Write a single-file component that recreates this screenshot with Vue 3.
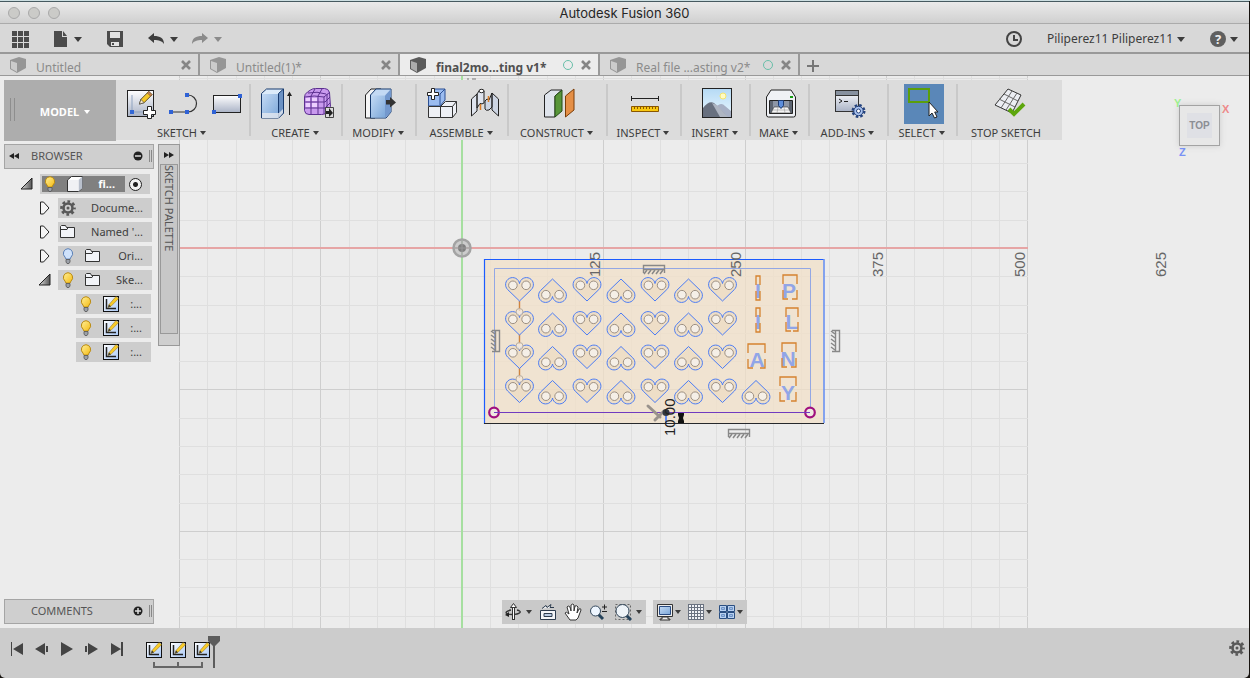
<script setup>
import { ref } from 'vue'

const tabs = [
  { label: 'Untitled' },
  { label: 'Untitled(1)*' },
  { label: 'final2mo...ting v1*', active: true, synced: true },
  { label: 'Real file ...asting v2*', synced: true },
]

const groups = [
  { label: 'SKETCH', menu: true, icons: ['sketch', 'line', 'rect'] },
  { label: 'CREATE', menu: true, icons: ['extrude', 'form'] },
  { label: 'MODIFY', menu: true, icons: ['presspull'] },
  { label: 'ASSEMBLE', menu: true, icons: ['component', 'joint'] },
  { label: 'CONSTRUCT', menu: true, icons: ['plane'] },
  { label: 'INSPECT', menu: true, icons: ['measure'] },
  { label: 'INSERT', menu: true, icons: ['image'] },
  { label: 'MAKE', menu: true, icons: ['printer'] },
  { label: 'ADD-INS', menu: true, icons: ['script'] },
  { label: 'SELECT', menu: true, icons: ['select'], active: true },
  { label: 'STOP SKETCH', menu: false, icons: ['stop'] },
]

const tree = [
  { level: 'one', arrow: 'closed', icons: ['gear'], label: 'Docume...' },
  { level: 'one', arrow: 'closed', icons: ['folder'], label: "Named '..." },
  { level: 'one', arrow: 'closed', icons: ['bulb-off', 'folder'], label: 'Ori...' },
  { level: 'one', arrow: 'open', icons: ['bulb', 'folder'], label: 'Ske...' },
  { level: 'two', icons: ['bulb', 'mini-sketch'], label: ':...' },
  { level: 'two', icons: ['bulb', 'mini-sketch'], label: ':...' },
  { level: 'two', icons: ['bulb', 'mini-sketch'], label: ':...' },
]

const viewTools = [
  { icon: 'orbit', name: 'Orbit', menu: true },
  { icon: 'lookat', name: 'Look at' },
  { icon: 'pan', name: 'Pan' },
  { icon: 'zoom', name: 'Zoom' },
  { icon: 'zoomwin', name: 'Zoom window', menu: true },
]
const displayTools = [
  { icon: 'display', name: 'Display settings', menu: true },
  { icon: 'grid', name: 'Grid and snaps', menu: true },
  { icon: 'viewports', name: 'Viewports', menu: true },
]
const playback = [
  { icon: 'first', name: 'Go to start' },
  { icon: 'prev', name: 'Step back' },
  { icon: 'play', name: 'Play' },
  { icon: 'next', name: 'Step forward' },
  { icon: 'last', name: 'Go to end' },
]

const active = ref(true)

const step = 28.28
const columns = Array.from({ length: 31 }, (_, i) => ({
  x: Math.round(179 + i * step),
  major: i % 5 === 0,
}))
const rows = Array.from({ length: 40 }, (_, i) => ({
  y: Math.round(248 + (i - 6) * step),
  major: (i - 6) % 5 === 0,
}))
const axisLabels = [
  { x: 600, t: '125' },
  { x: 741, t: '250' },
  { x: 883, t: '375' },
  { x: 1025, t: '500' },
  { x: 1166, t: '625' },
]

const heartX = [519.5, 552.5, 587, 621, 655, 688.5, 722.5, 756]
const heartY = [278, 312, 345.5, 379.5]
const hearts = heartY.flatMap((y, r) =>
  heartX.slice(0, r === 3 ? 8 : 7).map((x, c) => ({ x, y, flip: c % 2 === 1 })),
)

const letters = [
  { t: 'I', x: 758, y: 298, box: [756, 276, 4, 24] },
  { t: 'P', x: 789, y: 298, box: [783, 275, 14, 24] },
  { t: 'I', x: 758, y: 329, box: [756, 308, 4, 24] },
  { t: 'L', x: 792, y: 329, box: [786, 308, 12, 23] },
  { t: 'A', x: 757, y: 367, box: [748, 344, 17, 24] },
  { t: 'N', x: 788, y: 366, box: [782, 343, 14, 24] },
  { t: 'Y', x: 788, y: 400, box: [780, 377, 16, 24] },
]
const bracket = ([x, y, w, h]) => {
  const k = Math.min(5, w / 2)
  return (
    `M${x} ${y + 9}V${y}H${x + w}V${y + 9}` +
    `M${x + w} ${y + h - 9}V${y + h}H${x + w - k}M${x + k} ${y + h}H${x}V${y + h - 9}`
  )
}
</script>

<template>
  <div class="app">
    <svg class="defs" aria-hidden="true">
      <defs>
        <linearGradient id="metal" x1="0" y1="0" x2="0" y2="1">
          <stop offset="0" stop-color="#fff" /><stop offset="1" stop-color="#aab3c6" />
        </linearGradient>
        <linearGradient id="blue" x1="0" y1="0" x2="1" y2="1">
          <stop offset="0" stop-color="#c4daf4" /><stop offset="1" stop-color="#7ba7d9" />
        </linearGradient>
        <linearGradient id="sky" x1="0" y1="0" x2="0" y2="1">
          <stop offset="0" stop-color="#b5daf5" /><stop offset="1" stop-color="#eaf7ff" />
        </linearGradient>
        <linearGradient id="paper" x1="0" y1="0" x2="1" y2="1">
          <stop offset="0" stop-color="#fff" /><stop offset="1" stop-color="#a9c8f5" />
        </linearGradient>
        <linearGradient id="gold" x1="0" y1="0" x2="1" y2="1">
          <stop offset="0" stop-color="#fff09a" /><stop offset="1" stop-color="#f5ba10" />
        </linearGradient>
        <linearGradient id="shade" x1="0" y1="0" x2="1" y2="0">
          <stop offset="0" stop-color="#ddd" /><stop offset="1" stop-color="#555" />
        </linearGradient>
      </defs>

      <symbol id="i-apps" viewBox="0 0 17 17">
        <path d="M0 0h5v5H0zM6 0h5v5H6zM12 0h5v5h-5zM0 6h5v5H0zM6 6h5v5H6zM12 6h5v5h-5zM0 12h5v5H0zM6 12h5v5H6zM12 12h5v5h-5z" fill="#4b4b4b" />
      </symbol>
      <symbol id="i-file" viewBox="0 0 14 16">
        <path d="M0 0h8v6h5v10H0zM9 0l4 5H9z" fill="#4b4b4b" />
      </symbol>
      <symbol id="i-save" viewBox="0 0 16 16">
        <path d="M0 0h16v16H3l-3-3z" fill="#4b4b4b" />
        <path d="M3 1h10v6H3zM4 11h8v4H4z" fill="#e2e2e2" />
        <path d="M5 12h2v2H5z" fill="#4b4b4b" />
      </symbol>
      <symbol id="i-undo" viewBox="0 0 16 12">
        <path d="M0 5L6 0v3c6 0 10 2 10 8-2-3-5-4-10-4v3z" fill="currentColor" />
      </symbol>
      <symbol id="i-clock" viewBox="0 0 16 16">
        <circle cx="8" cy="8" r="7" fill="none" stroke="#444" stroke-width="2" />
        <path d="M8 4v5h4" fill="none" stroke="#444" stroke-width="2" />
      </symbol>
      <symbol id="i-cube" viewBox="0 0 16 16">
        <path d="M0 3L9 0l7 2v9l-9 5-7-4z" fill="currentColor" />
        <path d="M1 4l6 2v9l-6-3.500z" fill="#fff" opacity=".5" />
      </symbol>
      <symbol id="i-close" viewBox="0 0 10 10">
        <path d="M1 1l8 8M9 1L1 9" stroke="#858585" stroke-width="2.600" />
      </symbol>

      <symbol id="i-pencil" viewBox="0 0 16 16">
        <path d="M1 15l1.500-5L11 1.500 14.500 5 6 13.500z" fill="#f6ca2a" stroke="#5a4a20" />
        <path d="M1 15l1.500-5L6 13.500z" fill="#f9ecd0" stroke="#444" stroke-width=".7" />
        <path d="M11 1.500L14.500 5l-1.600 1.600-3.500-3.500z" fill="#c98750" stroke="#704a30" stroke-width=".6" />
      </symbol>
      <symbol id="i-sketch" viewBox="0 0 32 32">
        <rect x="2.500" y="2.500" width="26" height="26" fill="url(#metal)" stroke="#222" />
        <path d="M7 7v17h17" fill="none" stroke="#8fa3c0" />
        <rect x="5" y="22" width="4" height="4" fill="#3469d6" />
        <use href="#i-pencil" x="13" y="2" width="16" height="15" />
        <path d="M22.500 18.500h4v4h4v4h-4v4h-4v-4h-4v-4h4z" fill="#fff" stroke="#222" />
      </symbol>
      <symbol id="i-line" viewBox="0 0 32 32">
        <path d="M3 24h17a8.500 8.500 0 0 0 0-17" fill="none" stroke="#333" stroke-width="1.200" />
        <path d="M1 22h4v4H1zM17 22h4v4h-4zM17 5h4v4h-4z" fill="#2f62d6" />
      </symbol>
      <symbol id="i-rect" viewBox="0 0 32 32">
        <rect x="2.500" y="7.500" width="27" height="17" fill="url(#metal)" stroke="#222" />
        <path d="M1 22h4v4H1zM27 6h4v4h-4z" fill="#2f62d6" />
      </symbol>
      <symbol id="i-extrude" viewBox="0 0 32 32">
        <path d="M1.500 5.500l5-4.500h17v24l-5 5h-17z" fill="#dcebfa" stroke="#173a6e" />
        <path d="M2 6h16v24H2z" fill="url(#blue)" />
        <path d="M18.500 5.500l5-4.500v24l-5 5z" fill="#6c92c4" stroke="#173a6e" />
        <path d="M2 25h17l4-4v4l-4.500 5H2z" fill="#e6eaf0" opacity=".8" />
        <path d="M29.500 27V6" stroke="#222" /><path d="M27 8l2.500-4.500L32 8z" fill="#222" />
      </symbol>
      <symbol id="i-form" viewBox="0 0 32 32">
        <path d="M1.500 9q0-3 3-5l3-2q2-1.500 5-1.500h9q4 0 5 4l1 14q0 3-2 4l-3 3q-1.500 1-4 1H6q-4 0-4.500-4z" fill="#c99aee" stroke="#5c3090" />
        <path d="M2 9q9-2 19 0l6-5M8 8v18M15 8v18M21 9v17M2 14h20l5-5M2 20h20l5-5M5 5q9-2 18 1M12 1L8 8M19 1l-4 7M24 6v17" fill="none" stroke="#5c3090" />
        <path d="M3 10h4v3H3zM9 10h5v3H9zM3 15h4v4H3zM9 15h5v4H9z" fill="#eccfff" />
        <path d="M22.500 19.500h8v10h-8z" fill="#dcdcdc" stroke="#444" />
        <path d="M23 23h3v-3l4 5-4 4v-3h-3z" fill="#222" />
      </symbol>
      <symbol id="i-presspull" viewBox="0 0 32 32">
        <path d="M1.500 7L7 1h10v23l-6 6H1.500z" fill="#f5f5f5" stroke="#222" />
        <path d="M6.500 7l5.500-6h15v23l-5 6H6.500z" fill="#c4daf4" stroke="#173a6e" />
        <path d="M7 7.500h14v22H7z" fill="url(#blue)" /><path d="M21 7.500L27 1v23l-6 6z" fill="#7398cd" />
        <path d="M22 12h4V9l6 5.500-6 5v-3h-4z" fill="#333" />
      </symbol>
      <symbol id="i-component" viewBox="0 0 32 32">
        <path d="M2.500 6L8 1h11v11l-5 6H2.500z" fill="#9bbcf0" stroke="#2b4f94" />
        <path d="M14 6v11M14 6l5-5" stroke="#2b4f94" fill="none" />
        <path d="M2.500 18.500h12v11h-12zM14.500 18.500l5-5h11v11l-4 5h-12z" fill="#eef0f5" stroke="#333" />
        <path d="M26.500 18.500v11M14.500 18.500h12l4-5" stroke="#333" fill="none" />
        <path d="M5.500.5h3v4h4v3h-4v4h-3v-4h-4v-3h4z" fill="#fff" stroke="#222" />
      </symbol>
      <symbol id="i-joint" viewBox="0 0 32 32">
        <path d="M2.500 11L8 6v17l-5.500 5zM8 6l2-3q2.500-2 5 0v12q-2 1.500-4 .5L8 20z" fill="#dfe4ee" stroke="#222" />
        <path d="M29.500 11L23 5v17l6.500 6zM23 5v14l-3 3q-3 1-4-1V13l2-2 2 1z" fill="#cdd5e3" stroke="#222" />
        <path d="M11.500 16v6M19.500 8v6" stroke="#d97c25" stroke-width="1.500" />
        <ellipse cx="12.500" cy="3" rx="2.500" ry="1.700" fill="#fff" stroke="#222" />
      </symbol>
      <symbol id="i-plane" viewBox="0 0 32 32">
        <path d="M1.500 7L8 2h11l-7 6v21H1.500z" fill="#dfe4ec" stroke="#222" />
        <path d="M12 8l7-6v21l-7 6z" fill="#58963a" stroke="#244c16" />
        <path d="M22.500 8L31 1v21l-8.500 7z" fill="#e58f46" stroke="#7a3d08" />
      </symbol>
      <symbol id="i-measure" viewBox="0 0 32 32">
        <path d="M2 10.500h28M2.500 8v5M29.500 8v5" stroke="#222" fill="none" />
        <path d="M2.500 18.500h27v5h-27z" fill="#f8c811" stroke="#8a5700" />
        <path d="M5.500 19v2M8.500 19v2M11.500 19v2M14.500 19v2M17.500 19v2M20.500 19v2M23.500 19v2M26.500 19v2" stroke="#8a5700" />
      </symbol>
      <symbol id="i-image" viewBox="0 0 32 32">
        <rect x="1.500" y=".5" width="29" height="29" fill="url(#sky)" stroke="#222" />
        <circle cx="22" cy="8" r="3" fill="#fffbc4" stroke="#f5e56d" />
        <path d="M14 20q6-7 10-2l6 5v6H14z" fill="#a7b0c5" />
        <path d="M2 20q6-8 11-5l10 10 3 4H2z" fill="#68707f" /><path d="M11 15l8 14h8l-11-12z" fill="#aeb5c2" />
      </symbol>
      <symbol id="i-printer" viewBox="0 0 32 32">
        <path d="M1.500 9L6 2h20l4.500 7v18q0 2-2 2h-25q-2 0-2-2z" fill="#eff1f5" stroke="#222" />
        <path d="M4.500 12.500h23v13h-23z" fill="#5d6572" stroke="#222" /><path d="M8 13h16v8H8z" fill="#8d96a6" />
        <path d="M9 19h14l3 6H6z" fill="#f4f4f4" stroke="#333" stroke-width=".6" />
        <path d="M8 22h16M13 19l-1 6M19 19l1 6" stroke="#999" stroke-width=".6" />
        <path d="M13.500 12.500h5v5l-2.500 3-2.500-3z" fill="#5d8edb" stroke="#203e74" />
        <path d="M25 8h3v2h-3z" fill="#179b12" />
      </symbol>
      <symbol id="i-script" viewBox="0 0 32 32">
        <rect x="1.500" y="2.500" width="23" height="21" fill="url(#metal)" stroke="#333" />
        <path d="M2 3h22v4H2z" fill="#87919f" /><path d="M2 7.500h22" stroke="#333" />
        <path d="M5 11l3 2-3 2M10 13.500h4" stroke="#222" fill="none" />
        <circle cx="24.500" cy="23" r="5.700" fill="none" stroke="#24427d" stroke-width="2.600" stroke-dasharray="2.500 1.980" />
        <circle cx="24.500" cy="23" r="4.700" fill="#aac3ef" stroke="#24427d" />
        <circle cx="24.500" cy="23" r="2" fill="#fff" stroke="#24427d" />
      </symbol>
      <symbol id="i-select" viewBox="0 0 32 32">
        <path d="M1 1h20v13H1z" fill="none" stroke="#5b9f0c" stroke-width="2" />
        <path d="M21 14v14l3-3 2.500 5 2.500-1-2.300-5H30z" fill="#fff" stroke="#222" />
      </symbol>
      <symbol id="i-stop" viewBox="0 0 32 32">
        <path d="M14 1l13 6-9 18L1 17z" fill="#eceef3" stroke="#333" />
        <path d="M10 6l14 7M5 11l16 8M18 3L7 20M23 5l-11 17" stroke="#666" fill="none" />
        <path d="M15 21l5 5 10-10" fill="none" stroke="#5da60c" stroke-width="4" />
      </symbol>

      <symbol id="i-bulb" viewBox="0 0 16 16">
        <path d="M8 .7a4.800 4.800 0 0 1 3 8.400l-1 2H6l-1-2A4.800 4.800 0 0 1 8 .7z" fill="url(#gold)" stroke="#b98a12" />
        <path d="M6 11.500h4v2.500l-1 1.500H7L6 14z" fill="#9ba0a8" stroke="#555" stroke-width=".8" />
      </symbol>
      <symbol id="i-bulb-off" viewBox="0 0 16 16">
        <path d="M8 .7a4.800 4.800 0 0 1 3 8.400l-1 2H6l-1-2A4.800 4.800 0 0 1 8 .7z" fill="#cfe2fb" stroke="#5a7fb5" />
        <path d="M6 11.500h4v2.500l-1 1.500H7L6 14z" fill="#9ba0a8" stroke="#555" stroke-width=".8" />
      </symbol>
      <symbol id="i-body" viewBox="0 0 16 16">
        <path d="M.5 4l4-3.500h11V12l-4 3.500H.5z" fill="#fff" stroke="#333" />
        <path d="M11.500 4l4-3.500V12l-4 3.500z" fill="#b9c0cc" /><path d="M1 4h10.500v11H1z" fill="#f0f1f4" />
      </symbol>
      <symbol id="i-gear" viewBox="0 0 16 16">
        <circle cx="8" cy="8" r="6.500" fill="none" stroke="#585858" stroke-width="2.600" stroke-dasharray="2.700 2.400" stroke-dashoffset="1.350" />
        <circle cx="8" cy="8" r="4.500" fill="none" stroke="#585858" stroke-width="2.600" />
        <circle cx="8" cy="8" r="1.500" fill="#585858" />
      </symbol>
      <symbol id="i-folder" viewBox="0 0 16 16">
        <path d="M.5 13.500v-11l1-1h4l1 2h8v10z" fill="#f2f4f8" stroke="#333" /><path d="M1 5.500h6l1-2" fill="none" stroke="#333" />
      </symbol>
      <symbol id="i-mini-sketch" viewBox="0 0 16 16">
        <rect x=".5" y=".5" width="15" height="15" fill="url(#paper)" stroke="#111" />
        <path d="M3.500 3v9.500H13" fill="none" stroke="#222" stroke-width="1.500" />
        <path d="M5 11.500l1-3L13 .5l2.500 2.200-7.500 7.600z" fill="#f8cb28" stroke="#8a6a20" stroke-width=".5" />
        <path d="M5 11.500l1-3 2 1.800z" fill="#333" />
      </symbol>

      <symbol id="i-orbit" viewBox="0 0 18 18">
        <path d="M13 7q4 1 3 2.500-2 2-8 2-5 0-6-1.500 0-2 5-3" fill="none" stroke="#333" stroke-width="1.300" />
        <path d="M9.500 17V3" stroke="#333" stroke-width="3" /><path d="M9.500 16V3" stroke="#fff" />
        <path d="M6.500 4.500l3-4 3 4z" fill="#fff" stroke="#333" /><path d="M1 12l4-3v5z" fill="#222" />
      </symbol>
      <symbol id="i-lookat" viewBox="0 0 18 18">
        <path d="M1.500 7.500h15v9h-15zM3 5.500l4-3 1 2 4-3-1 3h4" fill="#f4f6f9" stroke="#2d3c4e" />
        <path d="M5 10.500h8v3H5z" fill="#b9cbe3" stroke="#2d3c4e" />
      </symbol>
      <symbol id="i-pan" viewBox="0 0 18 18">
        <path d="M6 17L1 10q1-2 4 1L3 4q1-2 3 0l1 4V2q2-2 3 0v6l1-5q2-1 3 1l-1 6 2-4q2-1 2 1l-3 8-2 2z" fill="#fff" stroke="#333" />
      </symbol>
      <symbol id="i-zoom" viewBox="0 0 18 18">
        <path d="M9 11l5 5" stroke="#26435b" stroke-width="3" /><circle cx="6.500" cy="8" r="5" fill="#eef6ff" stroke="#34485c" />
        <path d="M13 4h5M15.500 1.500v5M13 8.500h5" stroke="#222" fill="none" />
      </symbol>
      <symbol id="i-zoomwin" viewBox="0 0 18 18">
        <path d="M1.500 1.500h15v15h-15z" fill="none" stroke="#666" stroke-dasharray="2 2" />
        <path d="M12 12l5 5" stroke="#26435b" stroke-width="3" /><circle cx="8.500" cy="8" r="6.500" fill="#eef3f8" stroke="#34485c" />
      </symbol>
      <symbol id="i-display" viewBox="0 0 18 18">
        <path d="M1.500 1.500h15v12h-15zM6 14v2H4v1h10v-1h-2v-2z" fill="#eee" stroke="#333" /><path d="M3.500 3.500h11v8h-11z" fill="url(#blue)" stroke="#2a4c83" />
      </symbol>
      <symbol id="i-grid" viewBox="0 0 18 18">
        <path d="M1.500 1.500h15v15h-15z" fill="#f2f4f8" /><path d="M1.500 1v16M4.500 1v16M7.500 1v16M10.500 1v16M13.500 1v16M16.500 1v16M1 1.500h16M1 4.500h16M1 7.500h16M1 10.500h16M1 13.500h16M1 16.500h16" stroke="#6a7280" />
      </symbol>
      <symbol id="i-viewports" viewBox="0 0 18 18">
        <path d="M1.500 2.500h7v6h-7zM9.500 2.500h7v6h-7zM1.500 9.500h7v6h-7zM9.500 9.500h7v6h-7z" fill="#b9d1f0" stroke="#2b4f82" />
        <path d="M3.500 4.500h3v2h-3zM11.500 4.500h3v2h-3zM3.500 11.500h3v2h-3zM11.500 11.500h3v2h-3z" fill="#9ebce4" stroke="#6e93c6" />
      </symbol>
      <symbol id="i-first" viewBox="0 0 16 16"><path d="M2 1h1v14H2zM14 2v12L4 8z" fill="#444" /></symbol>
      <symbol id="i-prev" viewBox="0 0 16 16"><path d="M11 2v12L1 8zM12 5h2v6h-2z" fill="#444" /></symbol>
      <symbol id="i-play" viewBox="0 0 16 16"><path d="M2 1v14l12-7z" fill="#444" /></symbol>
      <symbol id="i-next" viewBox="0 0 16 16"><path d="M4 2v12l10-6zM1 5h2v6H1z" fill="#444" /></symbol>
      <symbol id="i-last" viewBox="0 0 16 16"><path d="M12 1h2v14h-2zM2 2v12l10-6z" fill="#444" /></symbol>
      <symbol id="i-rewind" viewBox="0 0 10 8"><path d="M5 1v6L0 4zM10 1v6L5 4z" fill="#222" /></symbol>
      <symbol id="i-forward" viewBox="0 0 10 8"><path d="M0 1v6l5-3zM5 1v6l5-3z" fill="#222" /></symbol>
    </svg>

    <header class="titlebar">
      <div class="lights"><i></i><i></i><i></i></div>
      <h1>Autodesk Fusion 360</h1>
    </header>

    <nav class="quick" aria-label="Quick access">
      <button aria-label="Data panel"><svg width="17" height="17"><use href="#i-apps" /></svg></button>
      <button aria-label="File"><svg width="14" height="16"><use href="#i-file" /></svg><i class="caret"></i></button>
      <button aria-label="Save"><svg width="16" height="16"><use href="#i-save" /></svg></button>
      <div class="history">
        <button aria-label="Undo"><svg width="16" height="12"><use href="#i-undo" /></svg><i class="caret"></i></button>
        <button aria-label="Redo" class="redo"><svg class="mirror" width="16" height="12"><use href="#i-undo" /></svg><i class="caret"></i></button>
      </div>
      <div class="account">
        <button aria-label="Job status"><svg width="16" height="16"><use href="#i-clock" /></svg></button>
        <button class="user">Piliperez11 Piliperez11<i class="caret"></i></button>
        <button aria-label="Help"><span class="help">?</span><i class="caret"></i></button>
      </div>
    </nav>

    <div class="tabs">
      <div v-for="t in tabs" :key="t.label" class="tab" :class="{ active: t.active }">
        <svg class="cube" width="16" height="16"><use href="#i-cube" /></svg>
        <button class="tab-label">{{ t.label }}</button>
        <i v-if="t.synced" class="sync"></i>
        <button aria-label="Close tab"><svg width="10" height="10"><use href="#i-close" /></svg></button>
      </div>
      <button class="add-tab" aria-label="New tab">
        <svg width="12" height="12"><path d="M6 0v12M0 6h12" stroke="#777" stroke-width="2" /></svg>
      </button>
    </div>

    <main class="workspace">
      <svg class="scene" role="img" aria-label="Sketch canvas">
        <g transform="translate(0 -76)">
          <g shape-rendering="crispEdges">
            <path v-for="c in columns" :key="'c' + c.x" :d="`M${c.x + 0.5} 76V3000`" :stroke="c.major ? '#cecece' : '#dfdfdf'" />
            <path v-for="r in rows" :key="'r' + r.y" :d="`M179 ${r.y + 0.5}H1028`" :stroke="r.major ? '#cecece' : '#dfdfdf'" />
            <path d="M179 248H1028" stroke="#e6a5a5" stroke-width="2" />
            <path d="M462 76V3000" stroke="#a6dfa0" stroke-width="2" />
          </g>
          <path d="M467 79h2M472 79h4" stroke="#777" stroke-width="1" />
          <g>
            <circle cx="462" cy="248" r="8.500" fill="#c4c4c4" fill-opacity=".8" stroke="#a3a3a3" stroke-width="2.500" />
            <circle cx="462" cy="248" r="4" fill="#808080" /><path d="M462 241v14M455 248h14" stroke="#999" />
          </g>

          <path d="M485 260h339v163H485z" fill="#f1dfc8" fill-opacity=".76" />
          <path d="M484.500 424V259.500H824" fill="none" stroke="#1c5cff" stroke-width="1.200" />
          <path d="M824 259v164" stroke="#6a91f2" stroke-width="1.600" /><path d="M484 423.500h340" stroke="#26282c" stroke-width="1.200" />
          <path d="M494.500 412V268.500h316V412" fill="none" stroke="#93a7e4" />
          <path d="M494 412.500h316" stroke="#713bc0" stroke-width="1.200" />

          <g v-for="a in axisLabels" :key="a.t">
            <text class="axis" :transform="`translate(${a.x} 277) rotate(-90)`">{{ a.t }}</text>
          </g>

          <path d="M519.500 301v10M519.500 334v10M519.500 368v10" stroke="#cf8440" stroke-width="1.400" />
          <g v-for="(h, n) in hearts" :key="n" :transform="h.flip ? `translate(${h.x} ${h.y + 24}) scale(1 -1)` : `translate(${h.x} ${h.y})`">
            <path d="M0 5.500A7 7 0 1 0 -11.800 11.600L0 23 11.800 11.600A7 7 0 1 0 0 5.500Z" fill="#ecdcc3" fill-opacity=".7" stroke="#4b7cf5" />
            <circle cx="-6.600" cy="7.300" r="4.300" fill="#f5efe7" stroke="#9c8f82" />
            <circle cx="6.600" cy="7.300" r="4.300" fill="#f5efe7" stroke="#9c8f82" />
          </g>
          <g fill="#f3eadf" fill-opacity=".7" stroke="#b9ad9e">
            <circle cx="519.500" cy="312" r="3.500" /><circle cx="519.500" cy="346" r="3.500" /><circle cx="519.500" cy="379" r="3.500" />
          </g>

          <g v-for="(l, n) in letters" :key="'l' + n">
            <text class="letter" :x="l.x" :y="l.y">{{ l.t }}</text>
            <path :d="bracket(l.box)" fill="none" stroke="#d5832f" stroke-width="1.300" />
          </g>

          <g fill="#efe9e1" stroke="#a0107f" stroke-width="2.200">
            <circle cx="494" cy="412.500" r="4.800" /><circle cx="810" cy="412.500" r="4.800" />
          </g>
          <path d="M494 412.500h6M804 412.500h6" stroke="#713bc0" />

          <g v-for="(p, n) in ['translate(643 265)', 'translate(728 429)', 'translate(500 330) rotate(90)', 'translate(840 330) rotate(90)']" :key="'h' + n" :transform="p">
            <path d="M.5 8V.5h21V8M.5 4.500h21" fill="none" stroke="#888" stroke-width="1.400" />
            <path d="M1 9l3-4M5 9l3-4M9 9l3-4M13 9l3-4M17 9l3-4" stroke="#888" stroke-width="1.500" fill="none" />
          </g>
          <path d="M648 406l12 11M655 420l9-9" stroke="#99928c" stroke-width="3" stroke-linecap="round" />
          <circle cx="666" cy="412.500" r="3.500" fill="#303640" />
          <path d="M666 416v7" stroke="#2c6bff" stroke-width="1.500" />
          <text class="dimension" transform="translate(675 436) rotate(-90)">10.00</text>
          <path d="M678 413h6v2l-1 3 1 3v2h-6v-2l1-3-1-3z" fill="#111" />
        </g>
      </svg>

      <div class="ribbon">
        <button class="mode">MODEL<i class="caret small"></i></button>
        <div v-for="g in groups" :key="g.label" class="group">
          <div class="icons">
            <button v-for="i in g.icons" :key="i" :class="{ chosen: g.active && active }" :aria-label="i">
              <svg width="32" height="32"><use :href="'#i-' + i" /></svg>
            </button>
          </div>
          <button class="group-label">{{ g.label }}<i v-if="g.menu" class="caret small"></i></button>
        </div>
      </div>

      <div class="viewcube">
        <b class="y">Y</b><b class="x">X</b><b class="z">Z</b>
        <button>TOP</button>
      </div>

      <div class="panels">
        <aside class="browser">
          <header class="panel-head">
            <svg width="10" height="8"><use href="#i-rewind" /></svg>
            <h2>BROWSER</h2>
            <button class="round" aria-label="Collapse browser"><svg width="10" height="10"><circle cx="5" cy="5" r="4.500" fill="#222" /><path d="M2 5h6" stroke="#ddd" stroke-width="1.500" /></svg></button>
            <i class="grip"></i>
          </header>
          <ul>
            <li class="root">
              <button aria-label="Collapse"><svg width="14" height="14"><path d="M12 1v11H1z" fill="url(#shade)" stroke="#222" /></svg></button>
              <div class="node">
                <div class="picked">
                  <svg width="16" height="16"><use href="#i-bulb" /></svg>
                  <svg width="16" height="16"><use href="#i-body" /></svg>
                  <span>fi...</span>
                </div>
                <input type="radio" checked aria-label="Activate component" />
              </div>
            </li>
            <li v-for="(r, n) in tree" :key="n" :class="r.level">
              <button v-if="r.arrow" :aria-label="r.arrow === 'open' ? 'Collapse' : 'Expand'">
                <svg v-if="r.arrow === 'open'" width="14" height="14"><path d="M12 1v11H1z" fill="url(#shade)" stroke="#222" /></svg>
                <svg v-else width="14" height="14"><path d="M2.500 1h3L11 7l-5.500 6h-3z" fill="#f4f4f4" stroke="#222" /></svg>
              </button>
              <div class="node">
                <svg v-for="i in r.icons" :key="i" width="16" height="16"><use :href="'#i-' + i" /></svg>
                <span>{{ r.label }}</span>
              </div>
            </li>
          </ul>
        </aside>
        <aside class="palette">
          <button aria-label="Expand palette"><svg width="12" height="8" viewBox="0 0 10 8"><use href="#i-forward" /></svg></button>
          <div class="palette-strip">SKETCH PALETTE</div>
        </aside>
      </div>

      <div class="bottom">
        <section class="panel-head comments">
          <h2>COMMENTS</h2>
          <button class="round" aria-label="Add comment"><svg width="10" height="10"><circle cx="5" cy="5" r="4.500" fill="#222" /><path d="M2 5h6M5 2v6" stroke="#ddd" stroke-width="1.500" /></svg></button>
          <i class="grip"></i>
        </section>
        <div class="navbar">
          <div class="navset">
            <button v-for="t in viewTools" :key="t.icon" :aria-label="t.name">
              <svg width="18" height="18"><use :href="'#i-' + t.icon" /></svg><i v-if="t.menu" class="caret small"></i>
            </button>
          </div>
          <div class="navset tight">
            <button v-for="t in displayTools" :key="t.icon" :aria-label="t.name">
              <svg width="18" height="18"><use :href="'#i-' + t.icon" /></svg><i class="caret small"></i>
            </button>
          </div>
        </div>
      </div>
    </main>

    <footer class="timeline">
      <div class="playback">
        <button v-for="p in playback" :key="p.icon" :aria-label="p.name"><svg width="16" height="16"><use :href="'#i-' + p.icon" /></svg></button>
      </div>
      <div class="track">
        <div class="features">
          <button v-for="n in 3" :key="n" :aria-label="'Sketch ' + n"><svg width="16" height="16"><use href="#i-mini-sketch" /></svg></button>
        </div>
        <svg width="50" height="8"><path d="M1 0v5h48V0M25 0v5" fill="none" stroke="#666" stroke-width="2" /></svg>
      </div>
      <svg class="marker" width="12" height="32"><path d="M0 0h12v5L7 10v22H5V10L0 5z" fill="#5c5c5c" /></svg>
      <button class="settings" aria-label="Timeline settings"><svg width="16" height="16"><use href="#i-gear" /></svg></button>
    </footer>
  </div>
</template>

<style>
body {
  margin: 0;
  background: #17130f;
}
</style>

<style scoped>
.app {
  box-sizing: border-box;
  display: flex;
  flex-direction: column;
  min-height: 100vh;
  padding-right: 1px;
  border-top: 1px solid #cddfe2;
  overflow: hidden;
  font: 11px/16px "Noto Sans", "Open Sans", sans-serif;
  color: #3d3d3d;
}
.defs {
  position: absolute;
  width: 0;
  height: 0;
}
svg {
  display: block;
  flex: none;
}
button {
  display: flex;
  align-items: center;
  padding: 0;
  border: 0;
  background: none;
  font: inherit;
  color: inherit;
  white-space: nowrap;
}
h1,
h2,
ul {
  margin: 0;
  padding: 0;
  list-style: none;
  font: inherit;
}
.caret {
  width: 0;
  height: 0;
  border: 4px solid transparent;
  border-top: 5px solid currentColor;
  border-bottom: 0;
}
.caret.small {
  border-width: 4px 3px 0;
}

.titlebar {
  display: grid;
  grid-template-columns: 1fr auto 1fr;
  align-items: center;
  height: 21px;
  padding: 0 8px;
  border-top: 1px solid #465a60;
  border-bottom: 1px solid #ababab;
  background: linear-gradient(#eaeaea, #d0d0d0);
}
.titlebar h1 {
  font: 13px/20px Inter, sans-serif;
  color: #262626;
}
.lights {
  display: flex;
  gap: 8px;
}
.lights i {
  box-sizing: border-box;
  width: 12px;
  height: 12px;
  border: 1px solid #a9a9a9;
  border-radius: 50%;
  background: #cbcbc8;
}

.quick {
  box-sizing: border-box;
  display: flex;
  align-items: center;
  gap: 25px;
  height: 30px;
  padding: 2px 11px 0 12px;
  border-bottom: 2px solid #999;
  background: #d8d8d8;
}
.quick button {
  gap: 6px;
}
.history {
  display: flex;
  gap: 14px;
}
.redo {
  color: #8b8b8b;
}
.mirror {
  transform: scaleX(-1);
}
.account {
  display: flex;
  align-items: center;
  gap: 25px;
  margin-left: auto;
}
.quick .account button {
  gap: 4px;
}
.quick .user {
  font-size: 12px;
}
.help {
  width: 16px;
  border-radius: 50%;
  background: #5f5f5f;
  color: #eee;
  font-weight: 700;
  font-size: 13px;
  text-align: center;
}

.tabs {
  display: flex;
  height: 21px;
  border-bottom: 1px solid #999;
  background: #d8d8d8;
}
.tab {
  box-sizing: border-box;
  display: flex;
  align-items: center;
  gap: 8px;
  width: 200px;
  padding: 0 7px 0 10px;
  border-right: 2px solid #999;
  color: #8b8b8b;
}
.tab-label {
  flex: 1;
  padding: 6px 0 0 2px;
  font-size: 12px;
}
.cube {
  color: #969696;
}
.tab.active {
  background: #ececec;
  color: #505050;
}
.tab.active .tab-label {
  font-weight: 700;
}
.tab.active .cube {
  color: #5b5b5b;
}
.sync {
  box-sizing: border-box;
  width: 10px;
  height: 10px;
  border: 1px solid #68bfa9;
  border-radius: 50%;
}
.add-tab {
  padding: 3px 7px 0;
}

.workspace {
  position: relative;
  flex: 1;
  display: flex;
  flex-direction: column;
  background: #ececec;
}
.scene {
  position: absolute;
  inset: 0;
  width: 100%;
  height: 100%;
}
.axis {
  font: 15px "Liberation Sans", sans-serif;
  fill: #666;
}
.dimension {
  font: 15px "Liberation Sans", sans-serif;
  fill: #222;
}
.letter {
  font: bold 21px "Liberation Sans", sans-serif;
  fill: #91a5e7;
  text-anchor: middle;
}

.ribbon {
  position: relative;
  align-self: flex-start;
  display: grid;
  grid-template-columns: 112px 135px 92px 74px 92px 99px 74px 69px 59px 79px 69px 104px;
  height: 60px;
  margin: 4px 0 0 4px;
  background: #dcdcdc;
}
.mode {
  position: relative;
  justify-content: center;
  gap: 5px;
  padding: 2px 0 0 10px;
  background: #adadad;
  color: #fff;
  font-weight: 700;
}
.mode::before {
  content: "";
  position: absolute;
  left: 6px;
  top: 18px;
  width: 3px;
  height: 23px;
  border: solid #8e8e8e;
  border-width: 0 1px;
}
.group {
  display: flex;
  flex-direction: column;
  align-items: center;
  padding-top: 4px;
  background: linear-gradient(#c9c9c9, #c9c9c9) right 4px / 2px 52px no-repeat;
}
.group:last-child {
  background: none;
}
.icons {
  display: flex;
  justify-content: center;
  gap: 3px;
}
.icons button {
  justify-content: center;
  width: 40px;
  height: 40px;
}
.icons .chosen {
  background: #5a87b8;
}
.group-label {
  gap: 3px;
  padding: 1px 4px 0 0;
}
.group:last-child .group-label {
  padding-right: 8px;
}

.viewcube {
  position: absolute;
  right: 29px;
  top: 29px;
}
.viewcube button {
  justify-content: center;
  width: 41px;
  height: 41px;
  border: 1px solid #a3a3a3;
  background: linear-gradient(#dfe0e5, #dfe0e5) center / 25px 25px no-repeat #e7e7e7;
  box-shadow: 0 0 6px #ccc;
  font: bold 10px "Liberation Sans", sans-serif;
  color: #8c8e94;
}
.viewcube b {
  position: absolute;
  font: bold 11px/12px "Liberation Sans", sans-serif;
}
.viewcube .x {
  left: 43px;
  top: -2px;
  color: #ee8a8a;
}
.viewcube .y {
  left: -5px;
  top: -8px;
  color: #9df08f;
}
.viewcube .z {
  left: 0;
  top: 41px;
  color: #7891f5;
}

.panels {
  position: relative;
  display: flex;
  align-items: flex-start;
  gap: 4px;
  padding: 4px 0 0 4px;
}
.browser {
  width: 150px;
}
.panel-head {
  box-sizing: border-box;
  display: flex;
  align-items: center;
  width: 150px;
  height: 25px;
  padding: 0 1px 1px 4px;
  border: 1px solid #a5a5a5;
  background: #cfcfcf;
  color: #555;
}
.panel-head h2 {
  padding-left: 12px;
}
.round {
  margin-left: auto;
}
.grip {
  width: 1px;
  height: 12px;
  margin-left: 6px;
  border: solid #888;
  border-width: 0 1px;
}
.browser ul {
  display: grid;
  gap: 4px;
  padding-top: 5px;
}
.browser li {
  display: flex;
  align-items: center;
  gap: 6px;
  height: 20px;
  padding-left: 34px;
  padding-right: 2px;
}
.browser .root {
  padding-left: 16px;
  padding-right: 4px;
}
.browser .two {
  padding-left: 72px;
  padding-right: 3px;
}
.node {
  flex: 1;
  display: flex;
  align-items: center;
  gap: 9px;
  height: 20px;
  padding: 0 9px 0 2px;
  background: #cdcdcd;
}
.root .node {
  gap: 4px;
  padding: 0 8px 0 2px;
}
.node span {
  margin-left: auto;
}
.picked {
  flex: 1;
  display: flex;
  align-items: center;
  gap: 9px;
  height: 16px;
  padding: 0 10px 0 0;
  background: #808080;
  color: #fff;
  font-weight: 700;
}
.root input {
  appearance: none;
  width: 13px;
  height: 13px;
  margin: 0;
  border: 1px solid #222;
  border-radius: 50%;
  background: radial-gradient(#222 2px, #f4f4f4 3px);
}
.palette {
  box-sizing: border-box;
  width: 22px;
  height: 202px;
  padding: 0 1px;
  border: 1px solid #999;
  background: #cfcfcf;
}
.palette button {
  justify-content: center;
  width: 100%;
  height: 19px;
}
.palette-strip {
  box-sizing: border-box;
  height: 170px;
  border: 1px solid #999;
  background: #c7c7c7;
  color: #555;
  writing-mode: vertical-rl;
}

.bottom {
  position: relative;
  display: grid;
  grid-template-columns: 1fr auto 1fr;
  align-items: end;
  margin-top: auto;
  padding: 0 4px 4px;
}
.comments h2 {
  padding-left: 22px;
}
.navbar {
  display: flex;
  gap: 7px;
}
.navset {
  display: flex;
  align-items: center;
  gap: 7px;
  height: 24px;
  padding: 0 4px 0 2px;
  background: #c9c9c9;
}
.navset button {
  gap: 4px;
}
.navset.tight {
  gap: 6px;
  padding-left: 3px;
}
.navset.tight button {
  gap: 1px;
}

.timeline {
  display: flex;
  align-items: flex-start;
  height: 42px;
  padding: 8px 4px 0 9px;
  border-radius: 0 0 5px 5px;
  background: #ccc;
}
.playback {
  display: flex;
  gap: 9px;
  padding-top: 5px;
}
.track {
  display: grid;
  justify-items: center;
  gap: 4px;
  padding: 6px 0 0 21px;
}
.features {
  display: flex;
  gap: 8px;
}
.marker {
  margin-left: -2px;
}
.settings {
  margin-left: auto;
  padding-top: 4px;
}
</style>
